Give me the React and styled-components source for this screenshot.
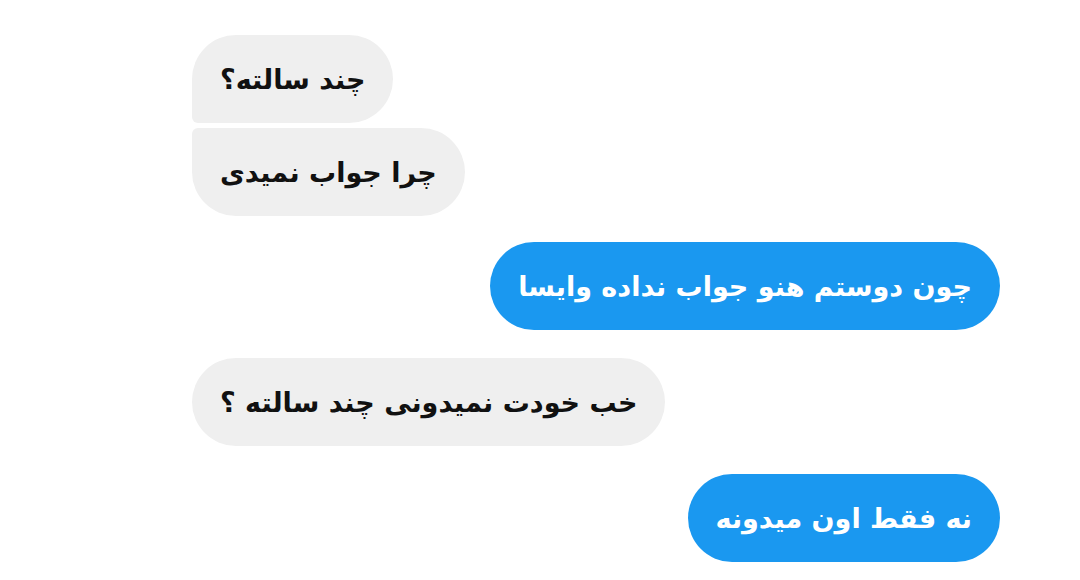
import styled, { createGlobalStyle } from "styled-components";

const GlobalStyle = createGlobalStyle`
  html, body {
    margin: 0;
    padding: 0;
    background: #ffffff;
  }
  body {
    font-family: "DejaVu Sans", "Noto Sans", sans-serif;
  }
`;

const messages = [
  { text: "چند سالته؟", mine: false, corner: "bottom" },
  { text: "چرا جواب نمیدی", mine: false, corner: "top", gap: 5 },
  { text: "چون دوستم هنو جواب نداده وایسا", mine: true, gap: 26 },
  { text: "خب خودت نمیدونی چند سالته ؟", mine: false, gap: 28 },
  { text: "نه فقط اون میدونه", mine: true, gap: 28 },
];

export default function App() {
  return (
    <>
      <GlobalStyle />
      <Thread>
        {messages.map((msg, index) => (
          <Row key={index} $mine={msg.mine} $gap={msg.gap || 0}>
            <Bubble dir="rtl" $mine={msg.mine} $corner={msg.corner}>
              {msg.text}
            </Bubble>
          </Row>
        ))}
      </Thread>
    </>
  );
}

const Thread = styled.main`
  width: 1080px;
  height: 580px;
  box-sizing: border-box;
  padding: 35px 80px 0 192px;
  display: flex;
  flex-direction: column;
  overflow: hidden;
`;

const Row = styled.div`
  display: flex;
  justify-content: ${(p) => (p.$mine ? "flex-end" : "flex-start")};
  margin-top: ${(p) => p.$gap}px;
`;

const Bubble = styled.div`
  height: 88px;
  box-sizing: border-box;
  padding: 0 28px;
  display: flex;
  align-items: center;
  font-size: 27px;
  font-weight: bold;
  line-height: 1;
  white-space: nowrap;
  background: ${(p) => (p.$mine ? "#1a98f0" : "#efefef")};
  color: ${(p) => (p.$mine ? "#ffffff" : "#111111")};
  border-radius: 44px;
  ${(p) => p.$corner === "bottom" && "border-bottom-left-radius: 6px;"}
  ${(p) => p.$corner === "top" && "border-top-left-radius: 6px;"}
`;
